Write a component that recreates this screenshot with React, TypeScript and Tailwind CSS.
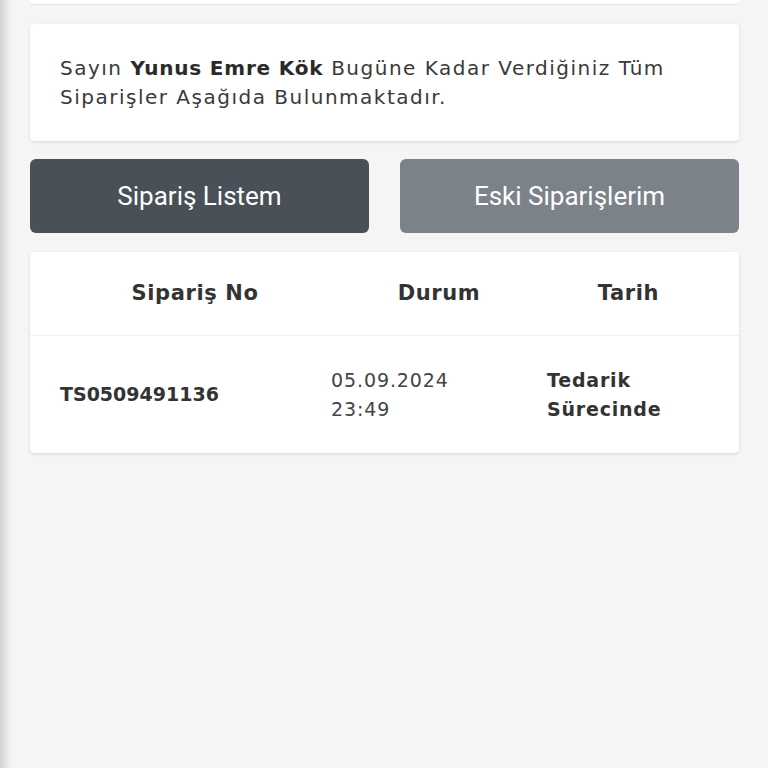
import React from "react";

const font = { fontFamily: '"DejaVu Sans", "Open Sans", sans-serif' };

const App = () => {
  return (
    <div className="flex min-h-[768px] w-[768px] bg-[#f5f5f5]">
      <div className="w-3 shrink-0 bg-gradient-to-r from-[#d2d2d2] to-[#f5f5f5]" />
      <div className="flex-1 pl-[18px] pr-[29px]" style={font}>
        <div className="h-[5px] bg-white border-b border-[#e4e4e4] rounded-b" />

        <div className="mt-[19px] bg-white rounded shadow-[0_1px_3px_rgba(0,0,0,0.12)] px-[30px] pt-[30px] pb-[29px] text-[20px] leading-[29px] tracking-[1.5px] text-[#3a3a3a]">
          Sayın <span className="font-bold tracking-[0.8px] text-[#2a2a2a]">Yunus Emre Kök</span> Bugüne Kadar Verdiğiniz Tüm
          <br />
          Siparişler Aşağıda Bulunmaktadır.
        </div>

        <div className="mt-[18px] grid grid-cols-2 gap-[31px]" style={{ fontFamily: "Roboto, sans-serif" }}>
          <button className="h-[74px] rounded-md bg-[#495057] text-white text-[26px]">
            Sipariş Listem
          </button>
          <button className="h-[74px] rounded-md bg-[#7b8289] text-white text-[26px]">
            Eski Siparişlerim
          </button>
        </div>

        <div className="mt-[19px] bg-white rounded shadow-[0_1px_3px_rgba(0,0,0,0.14)] text-[#333]">
          <div className="grid grid-cols-[330px_158px_1fr] h-[84px] items-center border-b border-[#f0f0f0] text-[21px] tracking-[0.6px] font-bold">
            <div className="text-center">Sipariş No</div>
            <div className="text-center">Durum</div>
            <div className="text-center">Tarih</div>
          </div>
          <div className="grid grid-cols-[271px_216px_1fr] h-[117px] items-center text-[19px] leading-[29px]">
            <div className="pl-[30px] font-bold">TS0509491136</div>
            <div className="pl-[30px] tracking-[0.9px] text-[#444]">
              05.09.2024
              <br />
              23:49
            </div>
            <div className="pl-[30px] font-semibold tracking-[0.8px]">
              Tedarik
              <br />
              Sürecinde
            </div>
          </div>
        </div>
      </div>
    </div>
  );
};

export default App;
